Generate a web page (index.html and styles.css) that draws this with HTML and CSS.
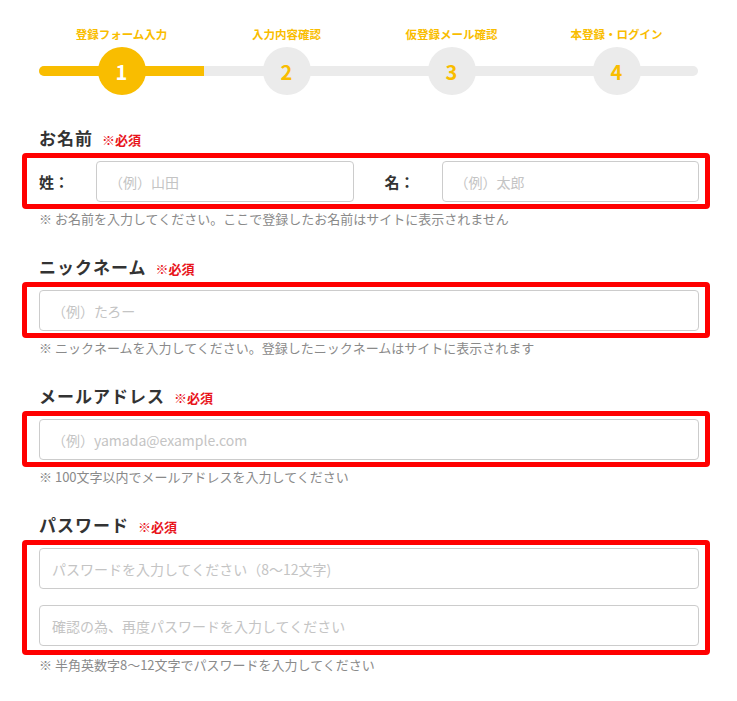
FILE: index.html
```html
<!DOCTYPE html>
<html lang="ja">
<head>
  <meta charset="UTF-8">
  <title>会員登録</title>
  <link rel="stylesheet" href="styles.css">
</head>
<body>
  <div class="wrap">

    <!-- progress steps -->
    <div class="steps">
      <div class="step-labels">
        <span>登録フォーム入力</span>
        <span>入力内容確認</span>
        <span>仮登録メール確認</span>
        <span>本登録・ログイン</span>
      </div>
      <div class="step-track">
        <div class="bar"><div class="bar-fill" style="width: 25%"></div></div>
        <div class="step-nums">
          <span class="num active">1</span>
          <span class="num">2</span>
          <span class="num">3</span>
          <span class="num">4</span>
        </div>
      </div>
    </div>

    <form class="reg-form">
      <div class="field">
        <div class="field-title">お名前 <span class="req">※必須</span></div>
        <div class="box">
          <div class="name-row">
            <div class="name-part">
              <label>姓：</label>
              <input type="text" class="txt" placeholder="（例）山田">
            </div>
            <div class="name-part">
              <label>名：</label>
              <input type="text" class="txt" placeholder="（例）太郎">
            </div>
          </div>
        </div>
        <p class="note">※ お名前を入力してください。ここで登録したお名前はサイトに表示されません</p>
      </div>

      <div class="field">
        <div class="field-title">ニックネーム <span class="req">※必須</span></div>
        <div class="box">
          <input type="text" class="txt" placeholder="（例）たろー">
        </div>
        <p class="note">※ ニックネームを入力してください。登録したニックネームはサイトに表示されます</p>
      </div>

      <div class="field">
        <div class="field-title">メールアドレス <span class="req">※必須</span></div>
        <div class="box">
          <input type="email" class="txt" placeholder="（例）yamada@example.com">
        </div>
        <p class="note">※ 100文字以内でメールアドレスを入力してください</p>
      </div>

      <div class="field">
        <div class="field-title">パスワード <span class="req">※必須</span></div>
        <div class="box box-pw">
          <input type="password" class="txt" placeholder="パスワードを入力してください（8〜12文字)">
          <input type="password" class="txt" placeholder="確認の為、再度パスワードを入力してください">
        </div>
        <p class="note">※ 半角英数字8〜12文字でパスワードを入力してください</p>
      </div>
    </form>

  </div>
</body>
</html>
```

FILE: styles.css
```css
:root {
  --yellow: #f9bd00;
  --track: #ebebeb;
  --text: #333333;
  --note: #8a8a8a;
  --red: #ff0000;
}

body {
  margin: 0;
  background: #ffffff;
  color: var(--text);
  font-family: "Noto Sans CJK JP", "Noto Sans", sans-serif;
}

.wrap {
  width: 660px;
  padding: 26px 0 0 39px;
}

/* Steps */
.step-labels,
.step-nums {
  display: grid;
  grid-template-columns: repeat(4, 1fr);
  justify-items: center;
}

.step-labels span {
  font-size: 11.5px;
  line-height: 16px;
  font-weight: bold;
  color: var(--yellow);
}

.step-track {
  position: relative;
  margin-top: 5px;
}

.bar {
  position: absolute;
  left: 0;
  right: 1px;
  top: 19px;
  height: 10px;
  border-radius: 5px;
  background: var(--track);
  overflow: hidden;
}

.bar-fill {
  height: 100%;
  background: var(--yellow);
}

.step-nums {
  position: relative;
}

.num {
  width: 48px;
  height: 48px;
  border-radius: 50%;
  background: var(--track);
  color: var(--yellow);
  display: flex;
  align-items: center;
  justify-content: center;
  font-size: 20px;
  font-weight: bold;
}

.num.active {
  background: var(--yellow);
  color: #ffffff;
}

/* Form */
.reg-form {
  margin-top: 31px;
}

.field {
  margin-bottom: 27px;
}

.field-title {
  display: flex;
  align-items: baseline;
  height: 24px;
  font-size: 17px;
  line-height: 24px;
  font-weight: bold;
  letter-spacing: 1px;
}

.req {
  margin-left: 9px;
  font-size: 13px;
  letter-spacing: 0;
  color: #e8141b;
}

.box {
  margin: 3px -11px 0 -17px;
  border: 5px solid var(--red);
  border-radius: 4px;
  padding: 3px 6px 2px 12px;
}

.box-pw {
  display: flex;
  flex-direction: column;
  gap: 16px;
  padding-bottom: 4px;
}

.txt {
  display: block;
  box-sizing: border-box;
  width: 100%;
  height: 41px;
  margin: 0;
  padding: 0 12px;
  border: 1px solid #cccccc;
  border-radius: 4px;
  font-family: inherit;
  font-size: 14px;
  color: var(--text);
  outline: none;
}

.txt::placeholder {
  color: #c4c4c4;
}

.name-row {
  display: grid;
  grid-template-columns: 1fr 1fr;
  column-gap: 31px;
}

.name-part {
  display: flex;
  align-items: center;
}

.name-part label {
  width: 57px;
  flex-shrink: 0;
  font-size: 15px;
  font-weight: bold;
}

.note {
  margin: 1px 0 0;
  font-size: 13px;
  line-height: 18px;
  color: var(--note);
}
```
